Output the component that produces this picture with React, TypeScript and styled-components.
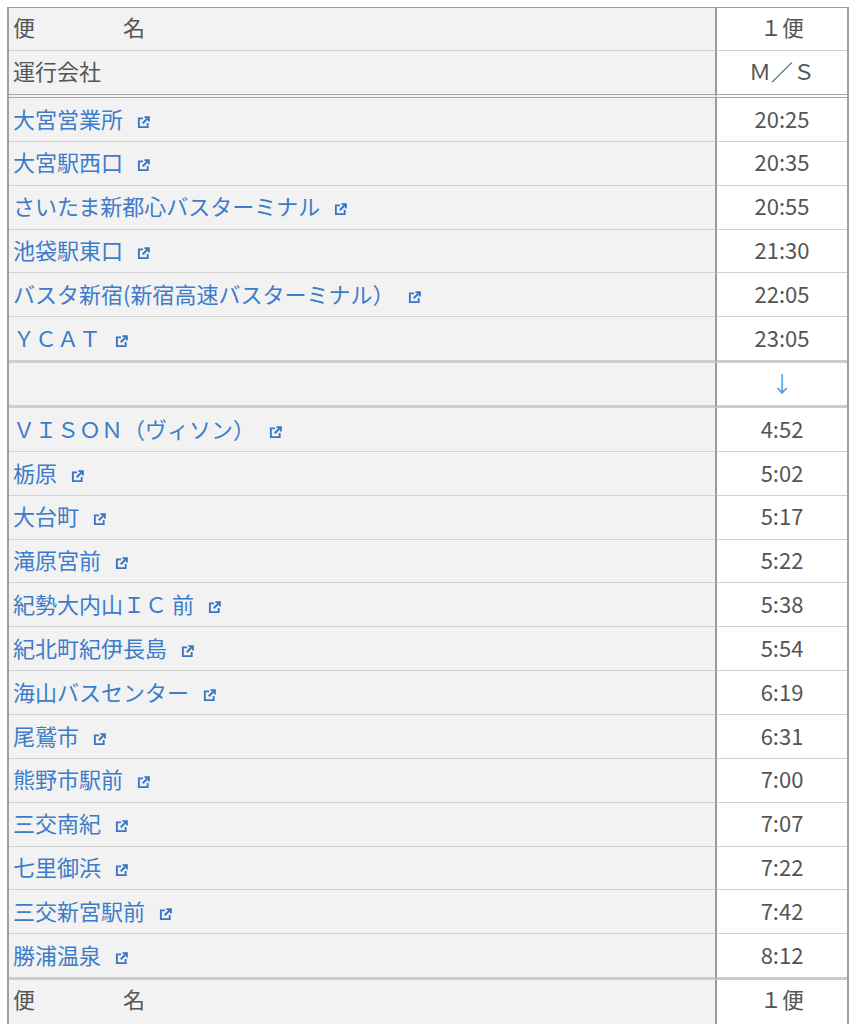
import React from 'react';
import styled, { createGlobalStyle } from 'styled-components';

const GlobalStyle = createGlobalStyle`
  html, body {
    margin: 0;
    padding: 0;
    background: #ffffff;
  }
  body {
    padding: 7px 0 0 7px;
    font-family: "Noto Sans CJK JP", "Noto Sans", sans-serif;
  }
`;

type Sep = 'thin' | 'double' | 'thick' | 'none';

const stops: { name: string; time: string }[] = [
  { name: '大宮営業所', time: '20:25' },
  { name: '大宮駅西口', time: '20:35' },
  { name: 'さいたま新都心バスターミナル', time: '20:55' },
  { name: '池袋駅東口', time: '21:30' },
  { name: 'バスタ新宿(新宿高速バスターミナル）', time: '22:05' },
  { name: 'ＹＣＡＴ', time: '23:05' },
];

const arrivals: { name: string; time: string }[] = [
  { name: 'ＶＩＳＯＮ（ヴィソン）', time: '4:52' },
  { name: '栃原', time: '5:02' },
  { name: '大台町', time: '5:17' },
  { name: '滝原宮前', time: '5:22' },
  { name: '紀勢大内山ＩＣ 前', time: '5:38' },
  { name: '紀北町紀伊長島', time: '5:54' },
  { name: '海山バスセンター', time: '6:19' },
  { name: '尾鷲市', time: '6:31' },
  { name: '熊野市駅前', time: '7:00' },
  { name: '三交南紀', time: '7:07' },
  { name: '七里御浜', time: '7:22' },
  { name: '三交新宮駅前', time: '7:42' },
  { name: '勝浦温泉', time: '8:12' },
];

const ExternalIcon = () => (
  <IconSvg viewBox="0 0 14 14" aria-hidden="true">
    <path d="M6.5 2.5H2v9.5h9.5V7.5" fill="none" stroke="currentColor" strokeWidth="2" />
    <path d="M8 1.2h4.8V6" fill="none" stroke="currentColor" strokeWidth="2" />
    <path d="M12.3 1.7L6.2 7.8" fill="none" stroke="currentColor" strokeWidth="2.2" />
  </IconSvg>
);

const StopRow: React.FC<{ name: string; time: string; sep: Sep }> = ({ name, time, sep }) => (
  <Row>
    <NameCell $sep={sep}>
      <StopLink href="#">
        {name}
        <ExternalIcon />
      </StopLink>
    </NameCell>
    <TimeCell $sep={sep}>{time}</TimeCell>
  </Row>
);

const App: React.FC = () => (
  <>
    <GlobalStyle />
    <Timetable>
      <thead>
        <Row>
          <HeadNameCell $sep="thin">便　　　　名</HeadNameCell>
          <HeadValueCell $sep="thin">１便</HeadValueCell>
        </Row>
        <Row>
          <HeadNameCell $sep="double">運行会社</HeadNameCell>
          <HeadValueCell $sep="double">Ｍ／Ｓ</HeadValueCell>
        </Row>
      </thead>
      <tbody>
        {stops.map((s, i) => (
          <StopRow key={s.name} name={s.name} time={s.time} sep={i === stops.length - 1 ? 'thick' : 'thin'} />
        ))}
        <Row>
          <ArrowNameCell $sep="thick" />
          <ArrowCell $sep="thick">↓</ArrowCell>
        </Row>
        {arrivals.map((s, i) => (
          <StopRow key={s.name} name={s.name} time={s.time} sep={i === arrivals.length - 1 ? 'thick' : 'thin'} />
        ))}
      </tbody>
      <tfoot>
        <Row>
          <FootNameCell $sep="none">便　　　　名</FootNameCell>
          <FootValueCell $sep="none">１便</FootValueCell>
        </Row>
      </tfoot>
    </Timetable>
  </>
);

const sepBorder = (sep: Sep) => {
  switch (sep) {
    case 'double':
      return 'border-bottom: 4px double #a6a6a6;';
    case 'thick':
      return 'border-bottom: 3px solid #cccccc;';
    case 'none':
      return 'border-bottom: 1px solid #cccccc;';
    default:
      return 'border-bottom: 1px solid #d0d0d0;';
  }
};

const Timetable = styled.table`
  width: 842px;
  border-collapse: separate;
  border-spacing: 0;
  border-top: 1px solid #999999;
  border-left: 2px solid #a0a0a0;
  border-right: 2px solid #a0a0a0;
  font-size: 22px;
  line-height: 1.3;
  table-layout: fixed;
`;

const Row = styled.tr``;

const Cell = styled.td<{ $sep: Sep }>`
  box-sizing: border-box;
  height: ${(p) => (p.$sep === 'thick' ? 45.85 : 43.85)}px;
  padding: 0 4px 3px;
  vertical-align: middle;
  ${(p) => sepBorder(p.$sep)}
`;

const NameCell = styled(Cell)`
  width: 708px;
  background: #f2f2f2;
  border-right: 2px solid #999999;
  text-align: left;
`;

const TimeCell = styled(Cell)`
  background: #ffffff;
  text-align: center;
  color: #555555;
`;

const HeadNameCell = styled(NameCell)`
  height: ${(p) => (p.$sep === 'double' ? 47 : 43)}px;
  padding-bottom: 5px;
  color: #555555;
`;

const HeadValueCell = styled(TimeCell)`
  height: ${(p) => (p.$sep === 'double' ? 47 : 43)}px;
  padding-bottom: 5px;
`;

const FootNameCell = styled(HeadNameCell)`
  height: 48px;
  padding-bottom: 10px;
`;

const FootValueCell = styled(HeadValueCell)`
  height: 48px;
  padding-bottom: 10px;
`;

const ArrowNameCell = styled(NameCell)`
  height: 45px;
`;

const ArrowCell = styled(TimeCell)`
  height: 45px;
  color: #5b9bd5;
`;

const StopLink = styled.a`
  color: #3d7cc9;
  text-decoration: none;
  white-space: nowrap;
`;

const IconSvg = styled.svg`
  width: 13px;
  height: 13px;
  margin-left: 14px;
  vertical-align: -1px;
  color: #3a76c2;
`;

export default App;
